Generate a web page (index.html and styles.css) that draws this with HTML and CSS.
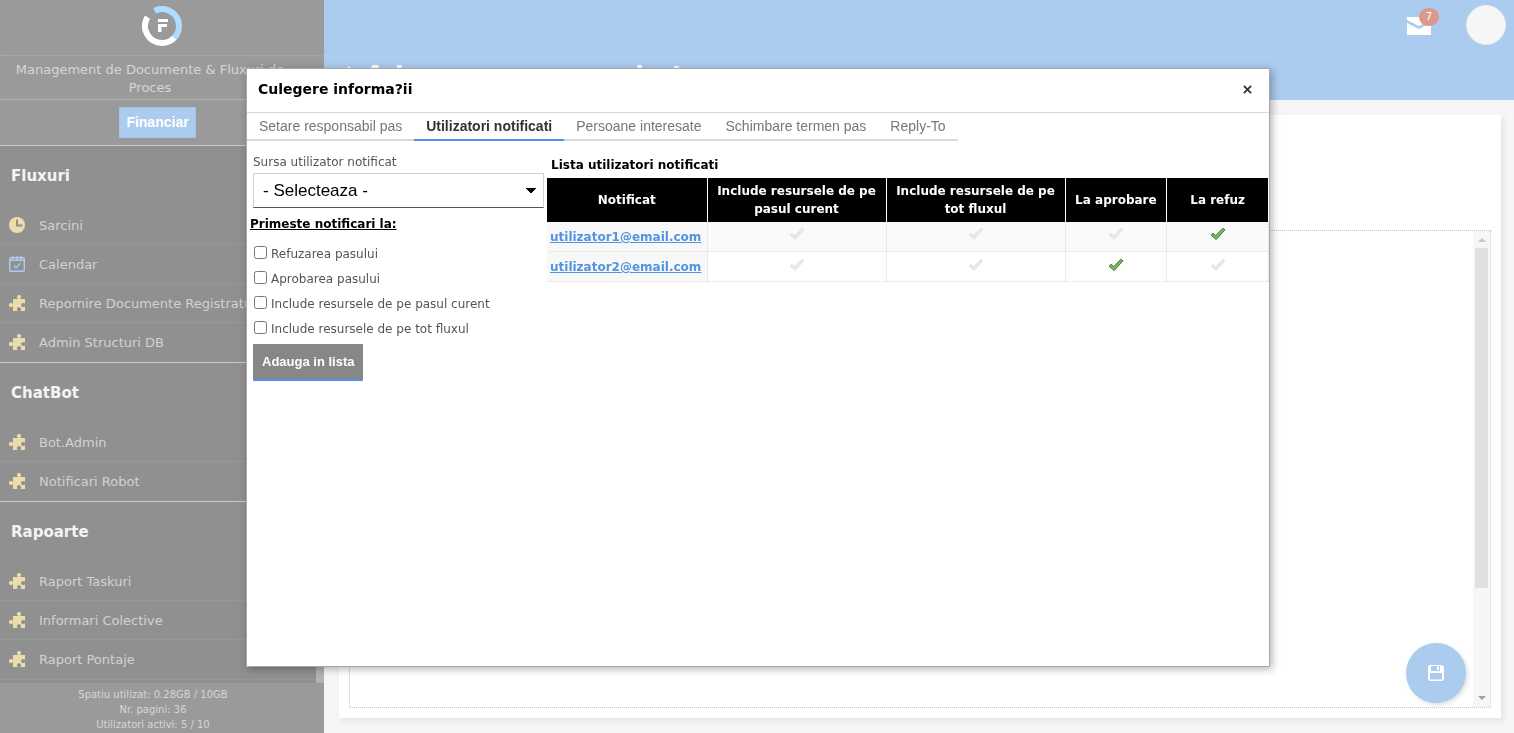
FILE: index.html
```html
<!DOCTYPE html>
<html lang="ro">
<head>
<meta charset="utf-8">
<title>Culegere informatii</title>
<link rel="stylesheet" href="styles.css">
</head>
<body>
<svg class="defs" aria-hidden="true">
  <defs>
    <linearGradient id="green" x1="0" y1="0" x2="1" y2="1">
      <stop offset="0" stop-color="#93c97e"/>
      <stop offset="1" stop-color="#6aa956"/>
    </linearGradient>
    <symbol id="puzzle" viewBox="0 0 16 16">
      <path d="M4 4H9V3.700A2 2 0 1 1 11 3.700V4H16V8.500H15.500A2 2 0 1 0 15.500 11.500H16V16H11.500V15.500A2 2 0 1 0 8.500 15.500V16H4V11H3.700A2 2 0 1 1 3.700 9H4z"/>
    </symbol>
    <symbol id="check" viewBox="0 0 16 14">
      <path d="M1 8.200 3 6.300 5.800 8.600 12.800 1.300 15 2.800 6.200 12.500z"/>
    </symbol>
  </defs>
</svg>

<div class="page">
  <aside class="sidebar">
    <div class="brand">
      <svg class="logo" viewBox="0 0 40 40" aria-label="F">
        <path class="ring-white" d="M5.505 11.117A17 17 0 0 0 20 37A17 17 0 0 0 32.510 31.510"/>
        <path class="ring-blue" d="M12.550 4.720A17 17 0 0 1 37 20A17 17 0 0 1 32.510 31.510"/>
        <path class="mark" d="M16 13h10v3H16zM16 18h9v3h-5.500v5H16z"/>
      </svg>
    </div>
    <p class="tagline">Management de Documente &amp; Fluxuri de Proces</p>
    <div class="domain"><button type="button" class="domain-button">Financiar</button></div>
    <nav class="menu">
      <section class="group">
        <h2>Fluxuri</h2>
        <a class="item" href="#"><svg class="icon" viewBox="0 0 16 16"><circle cx="8" cy="8" r="8"/><path class="hand" d="M8 2.500V8.500H13.500"/></svg>Sarcini</a>
        <a class="item" href="#"><svg class="icon calendar" viewBox="0 0 16 16"><rect x=".7" y="1.700" width="14.600" height="13.600" rx="1"/><path d="M1 4.200H15M4 0V4M12 0V4M8 0V4"/><path d="M5 9.800 7.200 12 11 7.300"/></svg>Calendar</a>
        <a class="item" href="#"><svg class="icon"><use href="#puzzle"/></svg>Repornire Documente Registratura</a>
        <a class="item" href="#"><svg class="icon"><use href="#puzzle"/></svg>Admin Structuri DB</a>
      </section>
      <section class="group">
        <h2>ChatBot</h2>
        <a class="item" href="#"><svg class="icon"><use href="#puzzle"/></svg>Bot.Admin</a>
        <a class="item" href="#"><svg class="icon"><use href="#puzzle"/></svg>Notificari Robot</a>
      </section>
      <section class="group">
        <h2>Rapoarte</h2>
        <a class="item" href="#"><svg class="icon"><use href="#puzzle"/></svg>Raport Taskuri</a>
        <a class="item" href="#"><svg class="icon"><use href="#puzzle"/></svg>Informari Colective</a>
        <a class="item" href="#"><svg class="icon"><use href="#puzzle"/></svg>Raport Pontaje</a>
      </section>
      <span class="menu-thumb"></span>
    </nav>
    <footer class="usage">
      <div>Spatiu utilizat: 0.28GB / 10GB</div>
      <div>Nr. pagini: 36</div>
      <div>Utilizatori activi: 5 / 10</div>
    </footer>
  </aside>

  <main class="main">
    <header class="topbar">
      <h1><svg class="up" viewBox="0 0 16 20"><path d="M8 0 15 8H10V20H6V8H1z"/></svg>Adauga resursa robot</h1>
      <div class="tools">
        <a class="mail" href="#" aria-label="Mesaje">
          <svg viewBox="0 0 24 18"><path d="M0 0H24V3L12 9 0 3z"/><path d="M0 6 12 12 24 6V18H0z"/></svg>
          <span class="badge">7</span>
        </a>
        <span class="avatar"></span>
      </div>
    </header>
    <div class="content">
      <div class="card">
        <div class="canvas">
          <div class="scrollbar">
            <span class="arrow-up"></span>
            <span class="thumb"></span>
            <span class="arrow-down"></span>
          </div>
        </div>
      </div>
    </div>
  </main>
</div>

<button type="button" class="save" aria-label="Salveaza">
  <svg viewBox="0 0 16 16"><path fill-rule="evenodd" d="M1.500 0H14L16 2V14.500L14.500 16H1.500L0 14.500V1.500zM3 1V6H12V1zM9 1.500V5H11V1.500zM2 8V14.500H14V8z"/></svg>
</button>

<div class="overlay">
  <div class="dialog" role="dialog" aria-labelledby="dialog-title">
    <header class="dialog-head">
      <h2 id="dialog-title">Culegere informa?ii</h2>
      <button type="button" class="close" aria-label="Inchide"><svg viewBox="0 0 10 10"><path d="M1 1 9 9M9 1 1 9"/></svg></button>
    </header>
    <nav class="tabs">
      <a class="tab" href="#">Setare responsabil pas</a>
      <a class="tab active" href="#">Utilizatori notificati</a>
      <a class="tab" href="#">Persoane interesate</a>
      <a class="tab" href="#">Schimbare termen pas</a>
      <a class="tab" href="#">Reply-To</a>
    </nav>
    <div class="dialog-body">
      <form class="form">
        <label class="field-label" for="source">Sursa utilizator notificat</label>
        <select id="source" class="select"><option>- Selecteaza -</option></select>
        <h3>Primeste notificari la:</h3>
        <label class="option"><input type="checkbox">Refuzarea pasului</label>
        <label class="option"><input type="checkbox">Aprobarea pasului</label>
        <label class="option"><input type="checkbox">Include resursele de pe pasul curent</label>
        <label class="option"><input type="checkbox">Include resursele de pe tot fluxul</label>
        <button type="button" class="add">Adauga in lista</button>
      </form>
      <section class="list">
        <h3>Lista utilizatori notificati</h3>
        <table>
          <colgroup><col class="c-user"><col class="c-wide"><col class="c-wide"><col class="c-narrow"><col class="c-narrow"></colgroup>
          <thead>
            <tr><th>Notificat</th><th>Include resursele de pe pasul curent</th><th>Include resursele de pe tot fluxul</th><th>La aprobare</th><th>La refuz</th></tr>
          </thead>
          <tbody>
            <tr>
              <td><a href="#">utilizator1@email.com</a></td>
              <td><svg class="check"><use href="#check"/></svg></td>
              <td><svg class="check"><use href="#check"/></svg></td>
              <td><svg class="check"><use href="#check"/></svg></td>
              <td><svg class="check on"><use href="#check"/></svg></td>
            </tr>
            <tr>
              <td><a href="#">utilizator2@email.com</a></td>
              <td><svg class="check"><use href="#check"/></svg></td>
              <td><svg class="check"><use href="#check"/></svg></td>
              <td><svg class="check on"><use href="#check"/></svg></td>
              <td><svg class="check"><use href="#check"/></svg></td>
            </tr>
          </tbody>
        </table>
      </section>
    </div>
  </div>
</div>
</body>
</html>
```
FILE: styles.css
```css
* { box-sizing: border-box; }

body {
  margin: 0;
  background: #f6f6f6;
  font-family: Verdana, "DejaVu Sans", sans-serif;
  font-size: 13px;
  overflow: hidden;
}

h1, h2, h3, p { margin: 0; }
a { text-decoration: none; }
.defs { position: absolute; width: 0; height: 0; }

.page {
  display: grid;
  grid-template-columns: 324px 1fr;
  height: 100vh;
}

/* Sidebar */
.sidebar {
  display: flex;
  flex-direction: column;
  min-height: 0;
  background: #9a9a9a;
  color: #d6d6d6;
}

.brand {
  display: flex;
  justify-content: center;
  height: 56px;
  padding-top: 6px;
  border-bottom: 1px dotted #b0b0b0;
}

.logo { width: 40px; height: 40px; }
.ring-white, .ring-blue { fill: none; stroke: #fff; stroke-width: 6; }
.ring-blue { stroke: #b0dcff; }
.mark { fill: #fff; }

.tagline {
  height: 44px;
  padding: 5px 32px 0 8px;
  border-bottom: 1px solid #b4b4b4;
  line-height: 18px;
  text-align: center;
}

.domain {
  display: flex;
  justify-content: center;
  height: 46px;
  padding: 7px 9px 0 0;
  border-bottom: 1px solid #c8c8c8;
}

.domain-button {
  height: 31px;
  padding: 0 6px 1px;
  border: 1px solid #a4c2ea;
  background: #abcbef;
  color: #fff;
  font: bold 14px "Liberation Sans", Arial, sans-serif;
}

.menu {
  position: relative;
  flex: 1;
  min-height: 0;
  overflow: hidden;
  background: #909090;
}

.group { border-bottom: 1px solid #c8c8c8; }
.group:last-of-type { border-bottom-color: #989898; }

.group h2 {
  padding-left: 11px;
  color: #f4f4f4;
  font-size: 15px;
  line-height: 60px;
}

.item {
  display: flex;
  align-items: center;
  gap: 14px;
  height: 39px;
  padding-left: 9px;
  border-bottom: 1px solid #989898;
  color: #d2d2d2;
  white-space: nowrap;
}

.group .item:last-of-type { border-bottom-color: transparent; }
.icon { flex: none; width: 16px; height: 16px; fill: #ebdcac; }
.hand { fill: none; stroke: #909090; stroke-width: 2; }
.calendar { fill: none; stroke: #abcbef; stroke-width: 1.4; }

.menu-thumb {
  position: absolute;
  right: 0;
  bottom: 0;
  width: 8px;
  height: 240px;
  background: #b2b2b2;
}

.usage {
  padding: 4px 18px 1px 0;
  font-size: 10px;
  line-height: 15px;
  text-align: center;
}

/* Main area */
.main {
  display: flex;
  flex-direction: column;
  min-width: 0;
}

.topbar {
  display: flex;
  align-items: flex-start;
  justify-content: space-between;
  height: 100px;
  padding: 5px 8px 0 17px;
  background: #abcbef;
}

.topbar h1 {
  display: flex;
  align-items: center;
  gap: 8px;
  padding-top: 56px;
  color: #fff;
  font-size: 26px;
  line-height: 30px;
}

.up { width: 16px; height: 20px; fill: #fff; }

.tools { display: flex; gap: 35px; align-items: flex-start; }
.mail { position: relative; display: block; padding-top: 12px; }
.mail svg { display: block; width: 24px; height: 18px; fill: #fff; }

.badge {
  position: absolute;
  top: 3px;
  left: 12px;
  width: 20px;
  border-radius: 9px;
  background: #dc998b;
  color: #fff;
  font-size: 10px;
  line-height: 18px;
  text-align: center;
}

.avatar {
  width: 40px;
  height: 40px;
  border: 1px solid #ececec;
  border-radius: 50%;
  background: #f6f6f6;
}

.content { display: flex; flex: 1; padding: 15px 13px 15px 15px; }

.card {
  flex: 1;
  display: flex;
  padding: 115px 10px 10px;
  background: #fff;
  box-shadow: 3px 3px 6px #e4e4e4;
}

.canvas {
  flex: 1;
  display: flex;
  justify-content: flex-end;
  border: 1px dotted #c4c4c4;
}

.scrollbar {
  display: flex;
  flex-direction: column;
  align-items: center;
  width: 17px;
  padding: 7px 0 7px;
  background: #f6f6f6;
}

.arrow-up, .arrow-down {
  border: 4px solid transparent;
  border-top-width: 0;
  border-bottom-color: #c8c8c8;
}

.arrow-down {
  margin-top: auto;
  border-top: 4px solid #a0a0a0;
  border-bottom: 0;
}

.thumb { width: 13px; height: 340px; margin-top: 6px; background: #e0e0e0; }

.save {
  position: fixed;
  right: 48px;
  bottom: 30px;
  display: grid;
  place-items: center;
  width: 60px;
  height: 60px;
  border: 0;
  border-radius: 50%;
  background: #abcbef;
  box-shadow: 2px 2px 4px #e0e0e0;
}

.save svg { width: 16px; height: 16px; fill: #fff; }

/* Dialog */
.overlay {
  position: fixed;
  inset: 0;
  display: grid;
  place-items: center;
  padding: 1px 0 0 2px;
}

.dialog {
  width: 1024px;
  max-width: 96vw;
  height: calc(100vh - 134px);
  border: 1px solid #a8a8a8;
  background: #fff;
  box-shadow: 2px 2px 8px rgba(0, 0, 0, .3);
}

.dialog-head {
  display: flex;
  align-items: center;
  justify-content: space-between;
  height: 44px;
  padding: 0 17px 2px 11px;
  border-bottom: 1px solid #d8d8d8;
}

.dialog-head h2 { font-size: 14px; color: #000; }
.close { padding: 0; border: 0; background: none; }
.close svg { display: block; width: 9px; height: 9px; fill: none; stroke: #333; stroke-width: 2; }

.tabs { display: flex; font: 14px "Liberation Sans", Arial, sans-serif; }

.tab {
  padding: 5px 12px 5px;
  border-bottom: 2px solid #d8d8d8;
  color: #777;
  line-height: 16px;
}

.tab.active { border-color: #5294e2; color: #333; font-weight: bold; }

.dialog-body { display: flex; }

.form {
  display: flex;
  flex-direction: column;
  align-items: flex-start;
  flex: none;
  width: 300px;
  padding: 12px 3px 0 6px;
  color: #555;
  font-size: 12px;
}

.field-label { line-height: 18px; }

.select {
  width: 291px;
  height: 35px;
  margin-top: 2px;
  padding: 0 9px;
  border: 1px solid #d0d0d0;
  border-bottom-color: #555;
  border-radius: 0;
  appearance: none;
  background: linear-gradient(to bottom left, #000 50%, transparent 52%) right 12px center / 5px 5px no-repeat,
              linear-gradient(to bottom right, #000 50%, transparent 52%) right 7px center / 5px 5px no-repeat;
  color: #000;
  font: 17px "Liberation Sans", Arial, sans-serif;
}

.form h3 {
  margin: 8px 0 9px -3px;
  color: #000;
  font-size: 12px;
  line-height: 17px;
  text-decoration: underline;
}

.option { display: flex; align-items: center; gap: 4px; height: 25px; line-height: 25px; }
.option input { width: 13px; height: 13px; margin: 0 0 4px 1px; }

.add {
  height: 37px;
  margin-top: 2px;
  padding: 0 9px;
  border: 0;
  border-bottom: 2px solid #5294e2;
  background: #878787;
  color: #fff;
  font: bold 13px "Liberation Sans", Arial, sans-serif;
}

.list { flex: 1; min-width: 0; padding-top: 14px; }
.list h3 { padding-left: 4px; font-size: 12px; line-height: 20px; padding-bottom: 3px; color: #000; }

table { width: 100%; border-collapse: collapse; table-layout: fixed; }
.c-user { width: 160px; }
.c-wide { width: 179px; }

th {
  height: 44px;
  padding: 0 4px;
  border-right: 1px solid #fff;
  background: #000;
  color: #fff;
  font-size: 12px;
  line-height: 18px;
}

td {
  height: 30px;
  padding: 0 3px;
  border-right: 1px dotted #d8d8d8;
  border-bottom: 1px solid #ececec;
  text-align: center;
}

td:first-child { background: #f8f8f8; text-align: left; }
tbody tr:first-child { background: #fafafa; }
td a { color: #5294e2; font-size: 12px; font-weight: bold; text-decoration: underline; }

.check { display: block; width: 16px; height: 14px; margin: 0 auto 4px; fill: #e8e8e8; stroke: #dedede; stroke-width: .6; }
.check.on { fill: url(#green); stroke: #3f7a2e; stroke-width: 1; }
```
